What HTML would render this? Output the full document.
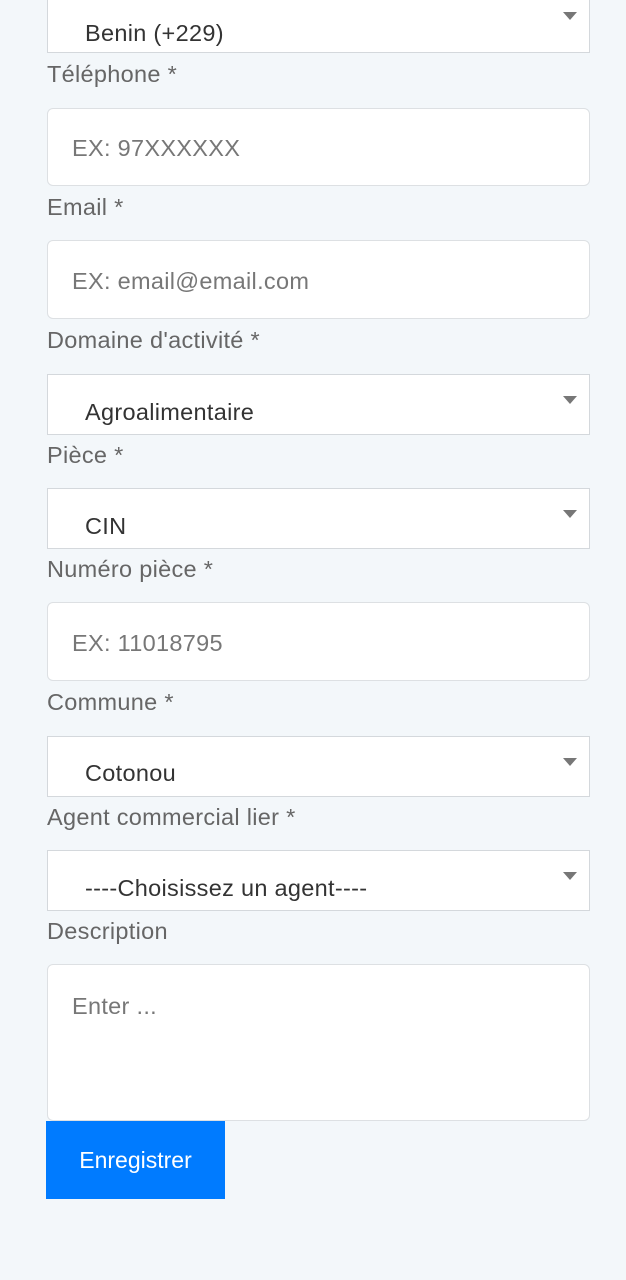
<!DOCTYPE html>
<html><head><meta charset="utf-8"><style>
body{margin:0;width:626px;height:1280px;background:#f3f7fa;font-family:"Liberation Sans",sans-serif;position:relative;overflow:hidden}
.a{position:absolute}
.lab{position:absolute;left:47px;font-size:23.5px;letter-spacing:0.3px;color:#666;line-height:26px;transform:translateY(-13px)}
.sel{position:absolute;left:47px;width:543px;height:59px;background:#fff;border:1px solid #d4d8dc;box-sizing:border-box}
.sel span{position:absolute;left:37px;font-size:23.5px;letter-spacing:0.3px;color:#333;line-height:26px}
.sel i{position:absolute;right:12px;top:21px;width:0;height:0;border-left:7px solid transparent;border-right:7px solid transparent;border-top:8px solid #777}
.inp{position:absolute;left:47px;width:543px;height:79px;background:#fff;border:1px solid #dde0e3;border-radius:6px;box-sizing:border-box}
.inp span{position:absolute;left:24px;font-size:23.5px;letter-spacing:0.3px;color:#777;line-height:26px}
</style></head><body>
<div class="sel" style="top:-6px"><span style="top:25px">Benin (+229)</span><i style="top:17px"></i></div>
<div class="lab" style="top:74px">Téléphone *</div>
<div class="inp" style="top:108px;height:78px"><span style="top:26px">EX: 97XXXXXX</span></div>
<div class="lab" style="top:207px">Email *</div>
<div class="inp" style="top:240px"><span style="top:27px">EX: email@email.com</span></div>
<div class="lab" style="top:340px">Domaine d'activité *</div>
<div class="sel" style="top:374px;height:61px"><span style="top:24px">Agroalimentaire</span><i></i></div>
<div class="lab" style="top:455px">Pièce *</div>
<div class="sel" style="top:488px;height:61px"><span style="top:24px">CIN</span><i></i></div>
<div class="lab" style="top:569px">Numéro pièce *</div>
<div class="inp" style="top:602px"><span style="top:27px">EX: 11018795</span></div>
<div class="lab" style="top:702px">Commune *</div>
<div class="sel" style="top:736px;height:61px"><span style="top:23px">Cotonou</span><i></i></div>
<div class="lab" style="top:817px">Agent commercial lier *</div>
<div class="sel" style="top:850px;height:61px"><span style="top:24px">----Choisissez un agent----</span><i></i></div>
<div class="lab" style="top:931px">Description</div>
<div class="inp" style="top:964px;height:157px"><span style="top:28px">Enter ...</span></div>
<div class="a" style="left:46px;top:1121px;width:179px;height:78px;background:#007bff;color:#fff;font-size:23px;line-height:78px;text-align:center">Enregistrer</div>
</body></html>
